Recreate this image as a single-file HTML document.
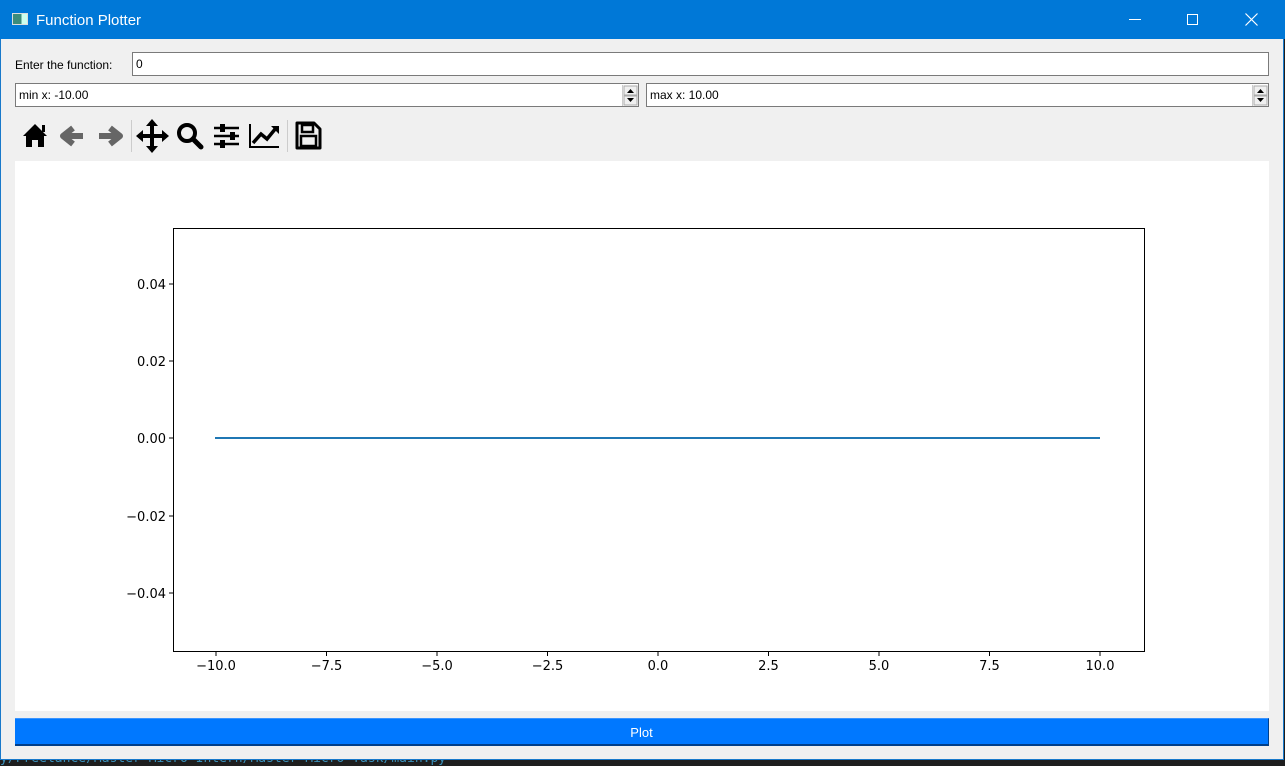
<!DOCTYPE html>
<html><head><meta charset="utf-8"><style>
*{margin:0;padding:0;box-sizing:border-box}
body{width:1285px;height:764px;background:#1e1e1e;position:relative;overflow:hidden;font-family:"Liberation Sans",sans-serif}
.win{position:absolute;left:0;top:0;width:1284px;height:760px;background:#f0f0f0;border:1px solid #1979ca}
.title{position:absolute;left:0;top:0;width:1285px;height:39px;background:#0078d7;color:#fff;font-size:15px}
.abs{position:absolute}
.inp{position:absolute;background:#fff;border:1px solid #7a7a7a;font-size:12px;padding-left:3px;line-height:23px;color:#000}
.spin{position:absolute;width:15px;height:21px;top:1px;right:1px;border-left:1px solid #ccc}
</style></head><body>
<div class="abs" style="left:0;font:13px 'DejaVu Sans Mono',monospace;color:#3a8fb8;white-space:nowrap;top:751px">y/Freelance/Master Micro Intern/Master Micro Task/main.py</div>
<div class="win"></div>
<div class="title">
 <div class="abs" style="left:12px;top:13px;width:16px;height:12px;border:1px solid #ddd;background:linear-gradient(90deg,#3c8c7c 0 60%,#cfe 60%)"></div>
 <div class="abs" style="left:36px;top:12px">Function Plotter</div>
 <div class="abs" style="left:1129px;top:19px;width:12px;height:1px;background:#fff"></div>
 <div class="abs" style="left:1187px;top:14px;width:11px;height:11px;border:1px solid #fff"></div>
 <svg class="abs" style="left:1245px;top:13px" width="13" height="13"><path d="M0.5 0.5L12.5 12.5M12.5 0.5L0.5 12.5" stroke="#fff" stroke-width="1.2"/></svg>
</div>
<div class="abs" style="left:15px;top:58px;font-size:12px">Enter the function:</div>
<div class="inp" style="left:132px;top:52px;width:1137px;height:24px">0</div>
<div class="inp" style="left:15px;top:83px;width:624px;height:24px">min x: -10.00
 <div class="spin"><svg width="15" height="21"><rect x="1" y="1" width="13" height="9" fill="#f0f0f0" stroke="#aaa"/><rect x="1" y="11" width="13" height="9" fill="#f0f0f0" stroke="#aaa"/><path d="M4 8h7l-3.5-4z M4 13h7l-3.5 4z" fill="#000"/></svg></div></div>
<div class="inp" style="left:646px;top:83px;width:623px;height:24px">max x: 10.00
 <div class="spin"><svg width="15" height="21"><rect x="1" y="1" width="13" height="9" fill="#f0f0f0" stroke="#aaa"/><rect x="1" y="11" width="13" height="9" fill="#f0f0f0" stroke="#aaa"/><path d="M4 8h7l-3.5-4z M4 13h7l-3.5 4z" fill="#000"/></svg></div></div>
<svg class="abs" style="left:15px;top:112px" width="310" height="46">
 <path d="M8 24L20 12L32 24L29 24L29 35L23 35L23 28L17 28L17 35L11 35L11 24Z" fill="#000"/><rect x="27" y="13" width="3" height="7" fill="#000"/>
 <path d="M58 16L48 24L58 32M48 24H68" stroke="#666" stroke-width="6" fill="none" stroke-linejoin="round"/>
 <path d="M95 16L105 24L95 32M105 24H84" stroke="#666" stroke-width="6" fill="none" stroke-linejoin="round"/>
 <rect x="116" y="8" width="1" height="32" fill="#ccc"/>
 <path d="M137 10V38M124 24H151" stroke="#000" stroke-width="4"/><path d="M137 7l-6 7h12zM137 41l-6-7h12zM121 24l7-6v12zM154 24l-7-6v12z" fill="#000"/>
 <circle cx="172" cy="21" r="8" stroke="#000" stroke-width="4" fill="none"/><path d="M178 27L186 35" stroke="#000" stroke-width="5" stroke-linecap="round"/>
 <path d="M199 16H224M199 24H224M199 32H224" stroke="#000" stroke-width="2.5"/><rect x="205" y="12" width="5" height="8" fill="#000"/><rect x="215" y="20" width="5" height="8" fill="#000"/><rect x="205" y="28" width="5" height="8" fill="#000"/>
 <path d="M235 12V35H264" stroke="#000" stroke-width="2" fill="none"/><path d="M238 31L246 22L252 27L261 16" stroke="#000" stroke-width="3.5" fill="none"/><path d="M256 14h8v8z" fill="#000"/>
 <rect x="272" y="8" width="1" height="32" fill="#ccc"/>
 <path d="M282 11H299L305 17V36H282Z" stroke="#000" stroke-width="3" fill="none" stroke-linejoin="round"/><rect x="287" y="13" width="11" height="7" fill="none" stroke="#000" stroke-width="2.5"/><rect x="286" y="24" width="15" height="10" fill="none" stroke="#000" stroke-width="2.5"/>
</svg>
<svg class="abs" style="left:15px;top:161px" width="1254" height="550" font-family="DejaVu Sans,sans-serif" font-size="13">
 <rect width="1254" height="550" fill="#fff"/>
 <rect x="158.5" y="67.5" width="971" height="423" fill="none" stroke="#000" stroke-width="1"/>
 <path d="M200 277H1085" stroke="#1f77b4" stroke-width="2"/>
 <g stroke="#000"><path d="M154 123H158M154 200H158M154 277H158M154 355H158M154 432H158"/>
 <path d="M201 491V495M311.5 491V495M422 491V495M532.5 491V495M643 491V495M753.5 491V495M864 491V495M974.5 491V495M1085 491V495"/></g>
 <g text-anchor="end"><text x="151" y="128">0.04</text><text x="151" y="205">0.02</text><text x="151" y="282">0.00</text><text x="151" y="360">−0.02</text><text x="151" y="437">−0.04</text></g>
 <g text-anchor="middle"><text x="201" y="509">−10.0</text><text x="311.5" y="509">−7.5</text><text x="422" y="509">−5.0</text><text x="532.5" y="509">−2.5</text><text x="643" y="509">0.0</text><text x="753.5" y="509">2.5</text><text x="864" y="509">5.0</text><text x="974.5" y="509">7.5</text><text x="1085" y="509">10.0</text></g>
</svg>
<div class="abs" style="left:15px;top:718px;width:1254px;height:28px;background:#0078ff;border-top:1px solid #3a94ff;border-bottom:2px solid #003f8a;border-right:1px solid #003f8a;color:#fff;font-size:13px;text-align:center;line-height:28px">Plot</div>
</body></html>
